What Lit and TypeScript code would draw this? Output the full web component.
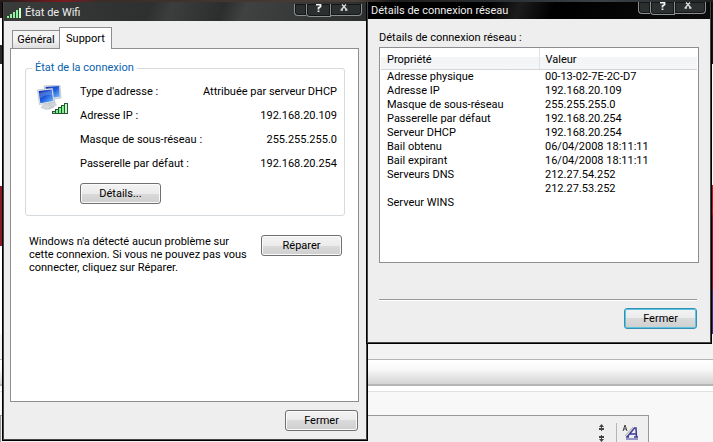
import { LitElement, html, css, svg } from "lit";
import { customElement } from "lit/decorators.js";

const STATUS = [
  ["Type d'adresse :", "Attribuée par serveur DHCP"],
  ["Adresse IP :", "192.168.20.109"],
  ["Masque de sous-réseau :", "255.255.255.0"],
  ["Passerelle par défaut :", "192.168.20.254"],
];

const DETAILS = [
  ["Adresse physique", "00-13-02-7E-2C-D7"],
  ["Adresse IP", "192.168.20.109"],
  ["Masque de sous-réseau", "255.255.255.0"],
  ["Passerelle par défaut", "192.168.20.254"],
  ["Serveur DHCP", "192.168.20.254"],
  ["Bail obtenu", "06/04/2008 18:11:11"],
  ["Bail expirant", "16/04/2008 18:11:11"],
  ["Serveurs DNS", "212.27.54.252"],
  ["", "212.27.53.252"],
  ["Serveur WINS", ""],
];

const signalBars = svg`
  <g fill="#8af59a">
    <rect x="0" y="8" width="2" height="2"/>
    <rect x="3" y="6" width="2" height="4"/>
    <rect x="6" y="4" width="2" height="6"/>
    <rect x="9" y="2" width="2" height="8"/>
    <rect x="12" y="0" width="2" height="10" fill="#c4ffc8"/>
  </g>`;

const networkIcon = svg`
  <defs>
    <linearGradient id="screen" x1="0" y1="0" x2="1" y2="1">
      <stop offset="0" stop-color="#0c2ca8"/><stop offset="0.5" stop-color="#1f5ce0"/><stop offset="1" stop-color="#7cc4fb"/>
    </linearGradient>
  </defs>
  <path d="M7 1L23 0L24 13L10 15Z" fill="#e0e4e8" stroke="#a8b0ba" stroke-width="0.6"/>
  <path d="M8.500 2L22 1L22.800 11.800L11 13Z" fill="url(#screen)"/>
  <path d="M9 20L17 15L20 20L12 25Z" fill="#d0d3d7"/>
  <path d="M0.500 5L15.500 3.200L17.500 17L2.500 19.500Z" fill="#eff1f3" stroke="#a8b0ba" stroke-width="0.6"/>
  <path d="M1.600 6L14.600 4.500L16.400 15.900L3.400 18.200Z" fill="url(#screen)"/>
  <path d="M2 8L14.500 5.500L15 10Q9 9 3 13Z" fill="#ffffff" opacity="0.2"/>
  <path d="M6 20L12 18.500L13 21L17 22L9 24.500L4 22.500Z" fill="#d4d7da" stroke="#b4b8bc" stroke-width="0.5"/>
  <g fill="#7ff08a" stroke="#27553a">
    <rect x="15.500" y="26.500" width="3" height="2"/>
    <rect x="18.500" y="24.500" width="3" height="4"/>
    <rect x="21.500" y="22.500" width="3" height="6"/>
    <rect x="24.500" y="20.500" width="3" height="8"/>
    <rect x="27.500" y="18.500" width="3" height="10" fill="#b8ffbe"/>
  </g>`;

@customElement("caption-buttons")
export class CaptionButtons extends LitElement {
  static styles = css`
    :host { display: flex; align-items: flex-start; }
    .btn {
      box-sizing: border-box; height: 12px; margin: 0; padding: 0;
      border: 1px solid #8d9090; border-top: 0; background: #2c2f2f;
      box-shadow: inset 0 0 0 1px #151717;
      display: flex; justify-content: center; align-items: flex-start;
    }
    .edge { width: 12px; border-radius: 0 0 0 4px; border-right: 0; }
    .help { width: 25px; height: 13px; border-radius: 0 0 0 4px; }
    .close { width: 31px; border-left: 0; border-radius: 0 0 4px 0; padding-right: 4px; }
  `;
  render() {
    return html`
      <button class="btn edge" aria-label="Agrandir"></button>
      <button class="btn help" aria-label="Aide">
        <svg width="7" height="9" viewBox="0 0 7 9"><path d="M1 0.500H5.500V2.500L3.500 4V5.500M3.500 6.500V8" fill="none" stroke="#f2f2f2" stroke-width="1.800"/></svg>
      </button>
      <button class="btn close" aria-label="Fermer la fenêtre">
        <svg width="8" height="7" viewBox="0 0 8 7"><path d="M0.500 6H3M5 6H7.500M1.500 5.500L6 0.500M2 0.500L6.500 5.500" fill="none" stroke="#d8d8d8" stroke-width="1.500"/></svg>
      </button>`;
  }
}

@customElement("app-root")
export class AppRoot extends LitElement {
  static styles = css`
    :host {
      display: block; position: relative; min-height: 100vh; overflow: hidden;
      font: 11px/14px Roboto, "Liberation Sans", sans-serif; color: #000;
      background: #f3f3f3;
    }
    * { box-sizing: border-box; }
    .backdrop { display: flex; flex-direction: column; height: 100vh; }
    .wallpaper {
      flex: 0 0 334px;
      background:
        linear-gradient(90deg, #241c1c, #7a1c20 9%, #3a2c28 14%, #4a4038 50%, #1c1c1c 55%, #3a4248 85%, #222) 0 0 / 100% 2px no-repeat,
        linear-gradient(#201818 18px, #fff 18px 45px, #2a2a2a 45px 64px, #fff 64px 186px, #8c1a24 186px 246px, #fff 246px) 0 0 / 2px 100% no-repeat,
        linear-gradient(#101414 64px, #fff 64px 185px, #c81420 185px 215px, #8c1430 215px 290px, #30308a 290px);
    }
    .strip { flex: 0 0 26px; background: #f3f3f3; border-bottom: 1px solid #b4b4b4; }
    .bar {
      flex: 0 0 26px; background: linear-gradient(#fff, #f8f8f8 40%, #d4d4d4);
      border-bottom: 2px solid #b4b6b6;
    }
    .page {
      flex: 1; margin-top: 5px; border-top: 1px solid #e0e0e0; background: #f8f8f8;
      padding: 23px 64px 0 0; box-shadow: 0 -5px #fff;
    }
    .toolbar {
      display: flex; justify-content: flex-end; gap: 4px; height: 100%;
      border: 1px solid #999; border-bottom: 0; background: #efefef; padding: 7px 9px 0 0;
    }
    .window { position: absolute; display: flex; flex-direction: column; border: 1px solid #000; background: #454747; padding: 0 1px 1px; }
    .status { left: 2px; top: 2px; bottom: 1px; width: 366px; border-top: 0; }
    .details { left: 366px; right: 1px; top: 2px; border-top: 0; }
    .title { display: flex; justify-content: space-between; color: #eee; flex: none; }
    .status .title {
      height: 19px; padding: 2px 4px 0 3px;
      background: linear-gradient(110deg, #3a3c3c, #2e3030 40%, #3c3e3e 46%, #2c2e2e 60%, #404242 66%, #2c2e2e);
    }
    .details .title { height: 17px; padding: 0 4px 0 3px; background: linear-gradient(110deg, #000 35%, #1c1c1c 44%, #000 54%, #0c0c0c); }
    .caption { display: flex; align-items: center; gap: 4px; font-weight: normal; font-size: 11px; margin: 0; }
    .body { flex: 1; display: flex; flex-direction: column; background: #eee; min-height: 0; }
    .status .body { padding: 6px 7px 8px 6px; }
    .tabs { display: flex; align-items: flex-end; padding: 0 2px; height: 21px; flex: none; }
    .tab {
      font: inherit; color: inherit; margin: 0; padding: 0; border: 1px solid #8c8e90; border-bottom: 0;
      width: 48px; height: 18px; background: linear-gradient(#f4f4f4 50%, #dedede);
    }
    .tab.active { width: 53px; height: 22px; background: #fff; margin: 0 0 -1px -1px; position: relative; }
    .panel { flex: 1; border: 1px solid #8c8e90; background: #fff; padding: 12px 13px 12px 14px; }
    .group { border: 1px solid #d5dadf; border-radius: 3px; margin: 0; padding: 10px 7px 11px 11px; min-width: 0; }
    .group legend { color: #0a5fae; padding: 0 3px; margin-left: -5px; }
    .conn { display: flex; gap: 11px; }
    .facts { flex: 1; margin: 0; }
    .fact { display: flex; justify-content: space-between; padding-bottom: 10px; }
    .fact dd { margin: 0; }
    .push {
      font: inherit; color: inherit; margin: 0; padding: 0; height: 21px; border: 1px solid #707070; border-radius: 3px;
      background: linear-gradient(#f3f3f3, #ebebeb 50%, #dadada 50%, #cfcfcf); box-shadow: inset 0 0 0 1px #fafafa;
    }
    .w81 { width: 81px; }
    .w73 { width: 73px; }
    .facts .push { margin-top: 2px; }
    .push.default { border-color: #3590b4; box-shadow: inset 0 0 0 1px #5cc4e0; }
    .repair { display: flex; justify-content: space-between; align-items: flex-start; padding: 19px 3px 0 4px; }
    .repair p { margin: 0; line-height: 13px; width: 222px; }
    .foot { display: flex; justify-content: flex-end; flex: none; }
    .status .foot { padding: 8px 1px 0 0; }
    .details .body { padding: 12px 11px 13px; }
    .label { margin: 0 0 2px; }
    .list { height: 216px; border: 1px solid #8c8e90; background: #fff; flex: none; padding: 0 1px; }
    table { width: 100%; border-collapse: collapse; table-layout: fixed; }
    th { font-weight: normal; text-align: left; height: 21px; padding: 3px 0 0 6px; background: linear-gradient(#fff 45%, #f2f4f6 45%, #f5f6f8); border-bottom: 1px solid #d5d5d5; }
    th + th { border-left: 1px solid #dfe4ea; }
    td { height: 14px; padding: 0 0 0 6px; }
    hr { align-self: stretch; margin: 36px 2px 7px 0; border: 0; border-top: 1px solid #999; border-bottom: 1px solid #fff; flex: none; }
    .details .foot { padding-right: 2px; }
    svg { display: block; flex: none; }
  `;

  render() {
    return html`
      <div class="backdrop">
        <div class="wallpaper"></div><div class="strip"></div><div class="bar"></div>
        <div class="page"><div class="toolbar">
          <svg width="20" height="20" viewBox="0 0 20 20">
            <path d="M1 4L3.500 1L6 4ZM1 5H6V7H1ZM1 13H6V15H1ZM1 16L3.500 19L6 16Z" fill="#444"/>
            <path d="M3.500 4V8M3.500 12V17" stroke="#444"/>
            <path d="M18.500 0V20" stroke="#b5b5b5"/>
          </svg>
          <svg width="17" height="17" viewBox="0 0 17 17">
            <path d="M1 8L3 2L5 8M2 6H4" fill="none" stroke="#444"/>
            <path d="M3 13L11 4" stroke="#aaa"/>
            <path d="M5 14L12.500 5H14L14.500 14M8 11H14M4 14H7M12 14H16" fill="none" stroke="#3c3c94" stroke-width="1.500"/>
            <path d="M4 16H16" stroke="#3c3c94"/>
          </svg>
        </div></div>
      </div>

      <section class="window status">
        <header class="title">
          <h1 class="caption"><svg width="14" height="10" viewBox="0 0 14 10">${signalBars}</svg>État de Wifi</h1>
          <caption-buttons></caption-buttons>
        </header>
        <div class="body">
          <div class="tabs" role="tablist">
            <button class="tab" role="tab">Général</button>
            <button class="tab active" role="tab" aria-selected="true">Support</button>
          </div>
          <div class="panel">
            <fieldset class="group">
              <legend>État de la connexion</legend>
              <div class="conn">
                <svg width="32" height="30" viewBox="0 0 32 30">${networkIcon}</svg>
                <div class="facts">
                  <dl class="facts">${STATUS.map(([k, v]) => html`<div class="fact"><dt>${k}</dt><dd>${v}</dd></div>`)}</dl>
                  <button class="push w81">Détails...</button>
                </div>
              </div>
            </fieldset>
            <div class="repair">
              <p>Windows n'a détecté aucun problème sur cette connexion. Si vous ne pouvez pas vous connecter, cliquez sur Réparer.</p>
              <button class="push w81">Réparer</button>
            </div>
          </div>
          <div class="foot"><button class="push w73">Fermer</button></div>
        </div>
      </section>

      <section class="window details">
        <header class="title"><h2 class="caption">Détails de connexion réseau</h2><caption-buttons></caption-buttons></header>
        <div class="body">
          <p class="label" id="list-label">Détails de connexion réseau :</p>
          <div class="list">
            <table aria-labelledby="list-label">
              <thead><tr><th>Propriété</th><th>Valeur</th></tr></thead>
              <tbody>${DETAILS.map(([k, v]) => html`<tr><td>${k}</td><td>${v}</td></tr>`)}</tbody>
            </table>
          </div>
          <hr />
          <div class="foot"><button class="push default w73">Fermer</button></div>
        </div>
      </section>`;
  }
}
